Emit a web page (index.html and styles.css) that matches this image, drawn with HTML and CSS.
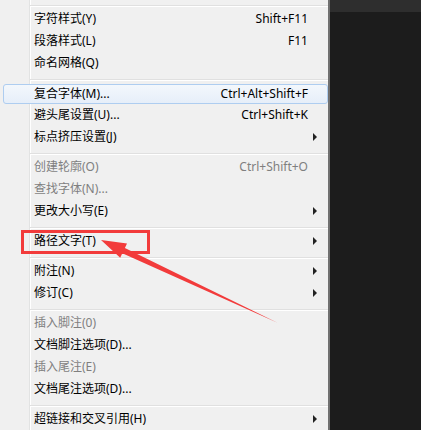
FILE: index.html
```html
<!DOCTYPE html>
<html lang="zh-CN">
<head>
  <meta charset="UTF-8">
  <title>菜单</title>
  <link rel="stylesheet" href="styles.css">
</head>
<body>

<div class="tela">
  <!-- Menu de contexto -->
  <ul class="menu">
    <li class="sep"></li>
    <li class="item"><span class="rotulo">字符样式(Y)</span><span class="atalho">Shift+F11</span><span class="seta"></span></li>
    <li class="item"><span class="rotulo">段落样式(L)</span><span class="atalho">F11</span><span class="seta"></span></li>
    <li class="item"><span class="rotulo">命名网格(Q)</span><span class="seta"></span></li>
    <li class="sep"></li>
    <li class="item ativo"><span class="rotulo">复合字体(M)...</span><span class="atalho">Ctrl+Alt+Shift+F</span><span class="seta"></span></li>
    <li class="item"><span class="rotulo">避头尾设置(U)...</span><span class="atalho">Ctrl+Shift+K</span><span class="seta"></span></li>
    <li class="item"><span class="rotulo">标点挤压设置(J)</span><span class="seta sub"></span></li>
    <li class="sep"></li>
    <li class="item off"><span class="rotulo">创建轮廓(O)</span><span class="atalho">Ctrl+Shift+O</span><span class="seta"></span></li>
    <li class="item off"><span class="rotulo">查找字体(N)...</span><span class="seta"></span></li>
    <li class="item"><span class="rotulo">更改大小写(E)</span><span class="seta sub"></span></li>
    <li class="sep"></li>
    <li class="item"><span class="rotulo">路径文字(T)</span><span class="seta sub"></span></li>
    <li class="sep"></li>
    <li class="item"><span class="rotulo">附注(N)</span><span class="seta sub"></span></li>
    <li class="item"><span class="rotulo">修订(C)</span><span class="seta sub"></span></li>
    <li class="sep"></li>
    <li class="item off"><span class="rotulo">插入脚注(0)</span><span class="seta"></span></li>
    <li class="item"><span class="rotulo">文档脚注选项(D)...</span><span class="seta"></span></li>
    <li class="item off"><span class="rotulo">插入尾注(E)</span><span class="seta"></span></li>
    <li class="item"><span class="rotulo">文档尾注选项(D)...</span><span class="seta"></span></li>
    <li class="sep"></li>
    <li class="item"><span class="rotulo">超链接和交叉引用(H)</span><span class="seta sub"></span></li>
  </ul>

  <!-- Area escura da direita -->
  <div class="fundo">
    <div class="faixa"></div>
  </div>

  <!-- Marcacao vermelha -->
  <svg class="marca" width="421" height="430" viewBox="0 0 421 430">
    <rect x="22.5" y="231.5" width="126" height="21" fill="none" stroke="#f23b3b" stroke-width="3"/>
    <polygon points="101,240 127,243.4 124.9,247.9 278,323 122.3,253.3 120.2,257.8" fill="#f23b3b"/>
  </svg>
</div>

</body>
</html>
```

FILE: styles.css
```css
* {
  margin: 0;
  padding: 0;
  box-sizing: border-box;
}
body {
  width: 421px;
  height: 430px;
  overflow: hidden;
  font-family: "Noto Sans", "Noto Sans CJK SC", sans-serif;
  font-size: 12px;
  color: #000;
}
.tela {
  position: relative;
  display: flex;
  height: 430px;
}
.menu {
  list-style: none;
  width: 330px;
  flex-shrink: 0;
  border-right: 2px solid #707070;
  background: linear-gradient(to right, #f0f0f0 29px, #e2e3e3 29px, #e2e3e3 30px, #fff 30px, #fff 31px, #f0f0f0 31px);
  overflow: hidden;
}
.sep {
  height: 8px;
  margin-left: 30px;
  padding-top: 5px;
}
.sep::before {
  content: "";
  display: block;
  height: 1px;
  background: #e0e0e0;
  border-bottom: 1px solid #fff;
  box-sizing: content-box;
}
.item {
  display: flex;
  align-items: center;
  height: 22px;
  padding-left: 34px;
  line-height: 22px;
  white-space: nowrap;
}
.item.off {
  color: #7f7f7f;
}
.item.ativo {
  height: 20px;
  margin: 2px 0 0 3px;
  padding-left: 30px;
  border: 1px solid #aecdf0;
  border-radius: 3px;
  background: linear-gradient(#f3f7fc, #e6eef9);
}
.rotulo {
  flex: 1;
}
.atalho {
  text-align: right;
}
.seta {
  width: 20px;
  height: 22px;
  display: flex;
  align-items: center;
}
.item.ativo .seta {
  width: 19px;
}
.seta.sub::before {
  content: "";
  margin-left: 5px;
  border-left: 4px solid #222;
  border-top: 4px solid transparent;
  border-bottom: 4px solid transparent;
}
.fundo {
  flex: 1;
  background: #1c1c1c;
}
.faixa {
  height: 12px;
  background: #2e2e2e;
}
.marca {
  position: absolute;
  left: 0;
  top: 0;
  pointer-events: none;
}
```
